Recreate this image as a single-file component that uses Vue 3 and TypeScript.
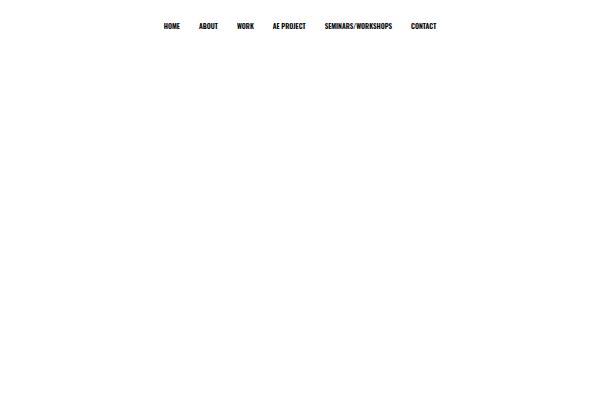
<script setup lang="ts">
interface NavItem {
  label: string
  href: string
}

const items: NavItem[] = [
  { label: 'HOME', href: '#home' },
  { label: 'ABOUT', href: '#about' },
  { label: 'WORK', href: '#work' },
  { label: 'AE PROJECT', href: '#ae-project' },
  { label: 'SEMINARS/WORKSHOPS', href: '#seminars-workshops' },
  { label: 'CONTACT', href: '#contact' },
]
</script>

<template>
  <header class="header">
    <nav class="nav">
      <a v-for="item in items" :key="item.href" class="link" :href="item.href">{{ item.label }}</a>
    </nav>
  </header>
</template>

<style>
body {
  background: #fff;
}
</style>

<style scoped>
.header {
  padding: 20px 16px;
}

.nav {
  display: flex;
  flex-wrap: wrap;
  justify-content: center;
  column-gap: 19px;
}

.link {
  color: #000;
  font-family: Oswald, "Liberation Sans Narrow", sans-serif;
  font-size: 7px;
  font-weight: 600;
  line-height: 12px;
  text-decoration: none;
  white-space: nowrap;
}
</style>
